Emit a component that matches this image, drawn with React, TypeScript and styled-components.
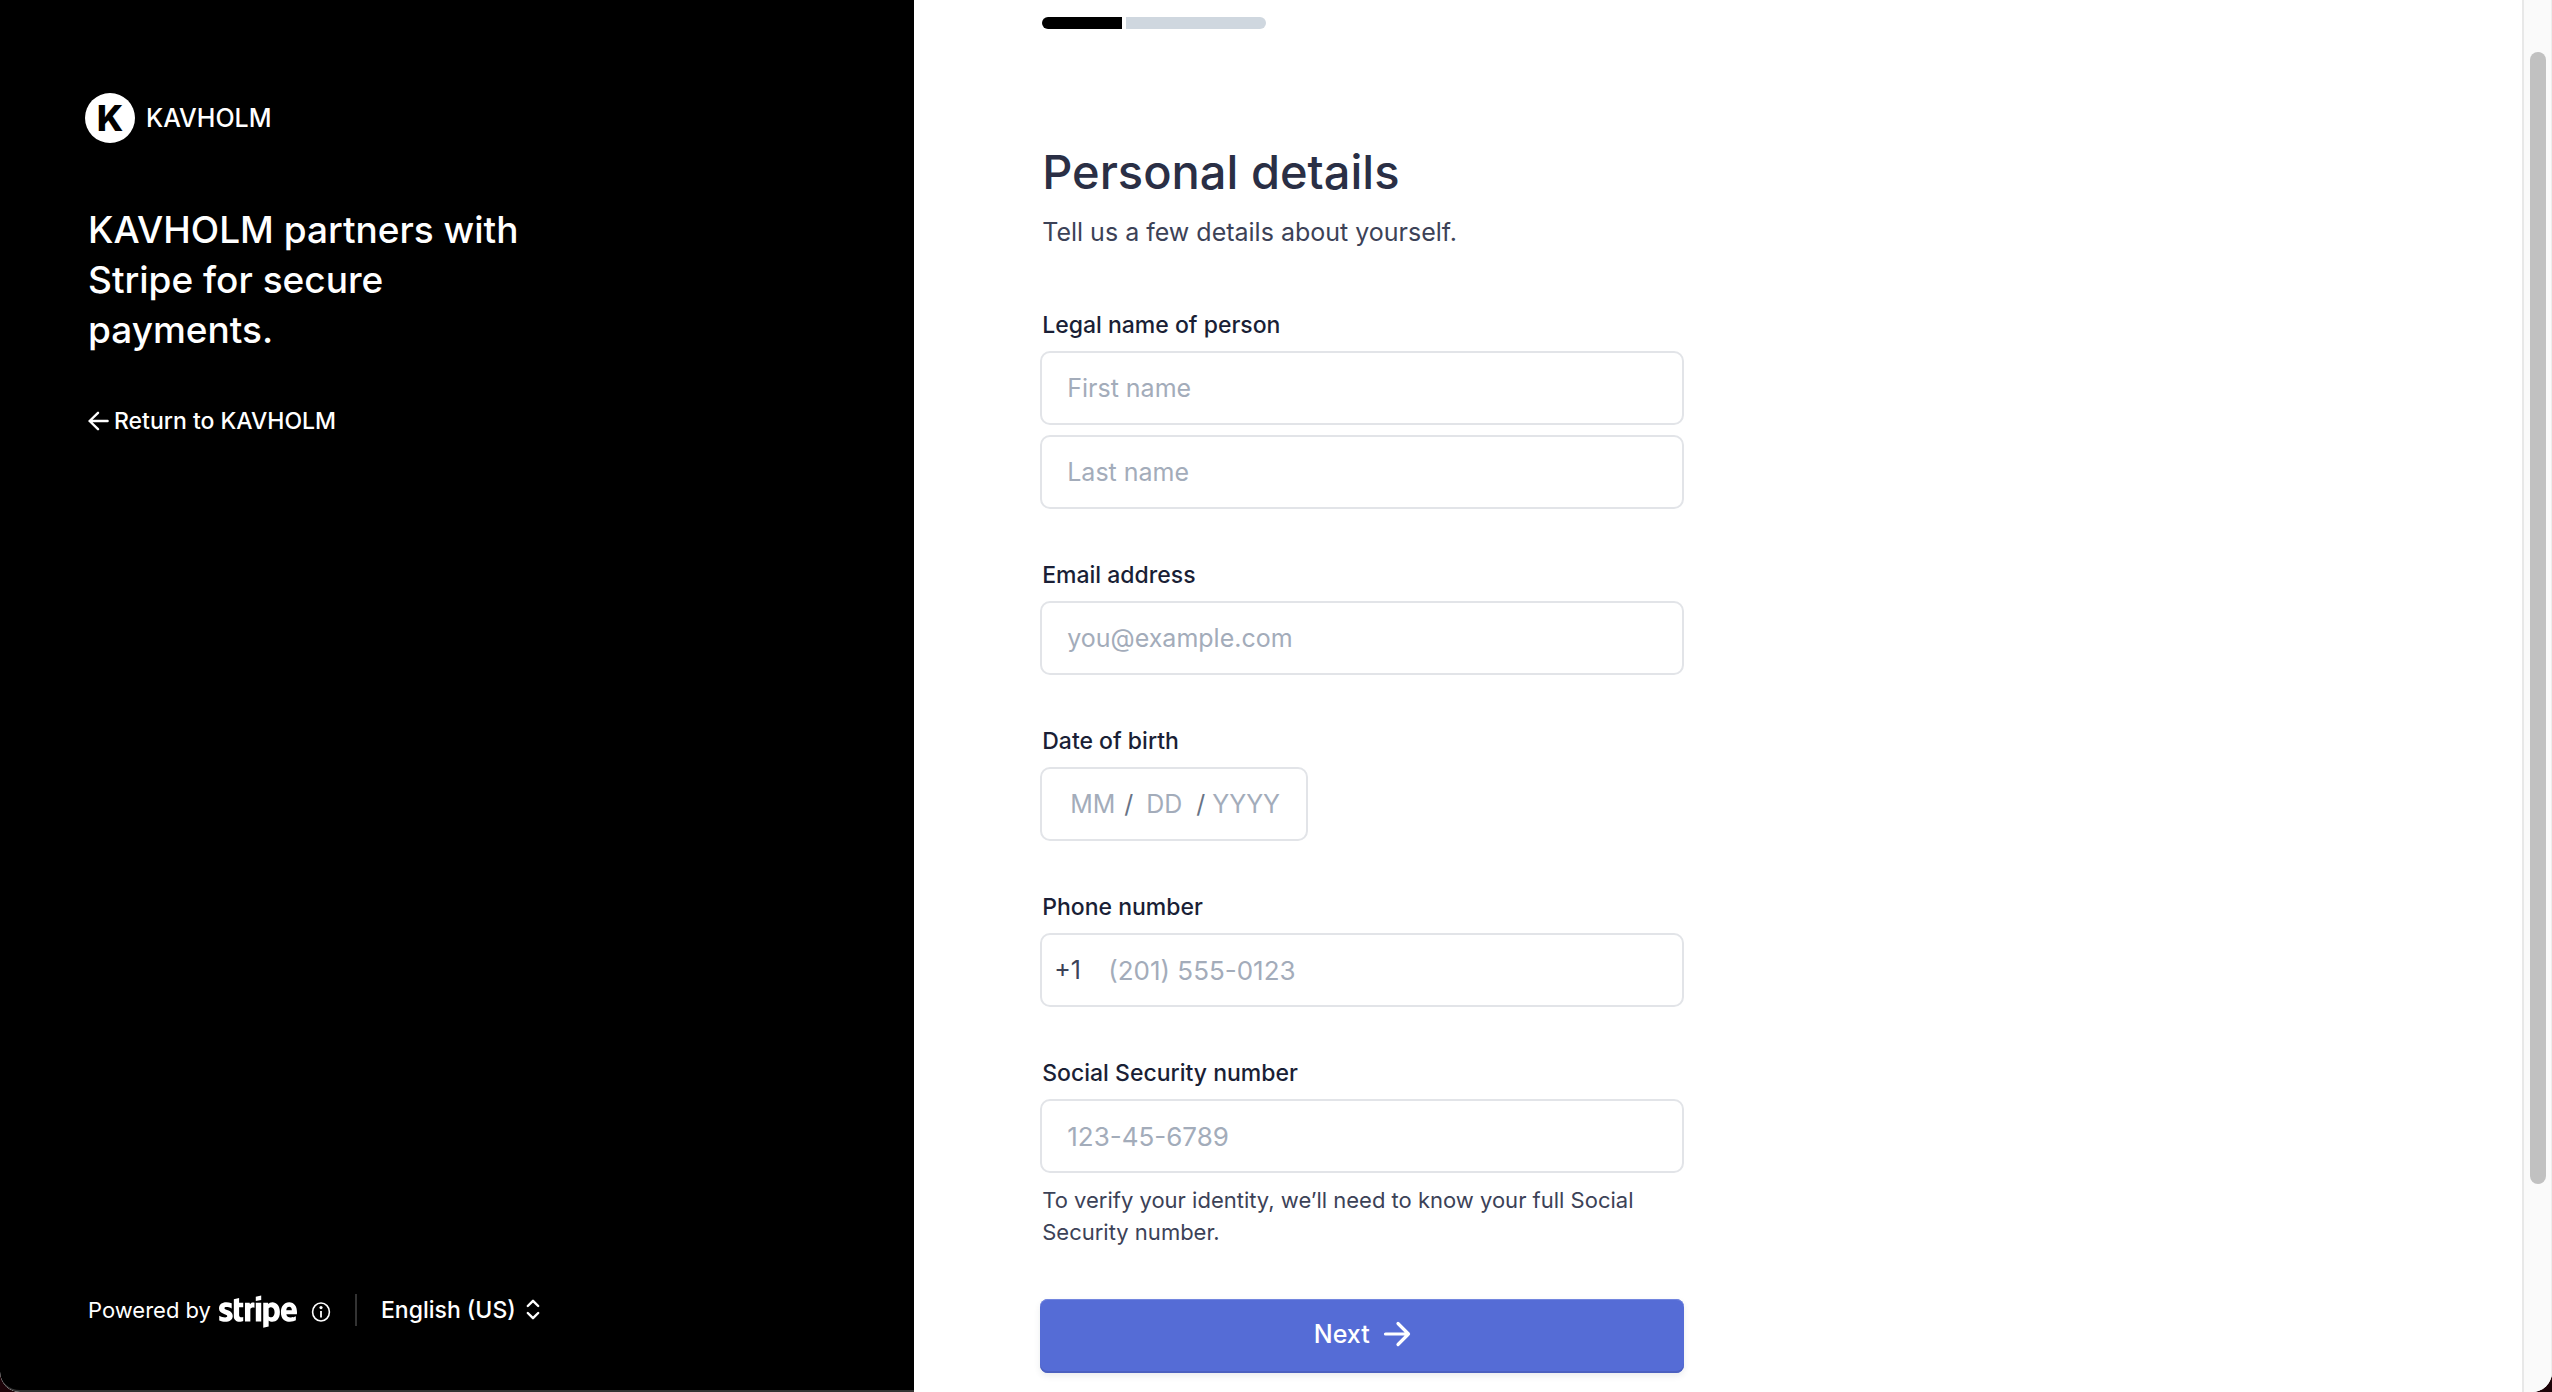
import React from 'react';
import styled, { createGlobalStyle } from 'styled-components';
import { FaStripe } from 'react-icons/fa';

const GlobalStyle = createGlobalStyle`
  *, *::before, *::after { box-sizing: border-box; }
  body {
    margin: 0;
    background: #1c0308;
    font-family: Inter, "Liberation Sans", sans-serif;
    -webkit-font-smoothing: antialiased;
  }
  h1, h2, p { margin: 0; }
  button, input, select { font: inherit; }
`;

const Window = styled.div`
  display: grid;
  grid-template-columns: 29fr 51fr 30px;
  min-height: 100vh;
  background: #fff;
  border-radius: 0 0 20px 20px;
  overflow: hidden;
`;

/* ---------- brand panel ---------- */

const BrandPanel = styled.aside`
  display: flex;
  flex-direction: column;
  padding: 93px 85px 64px;
  background: #000;
  color: #fff;
  border-bottom: 2px solid #333;
  border-bottom-left-radius: 20px;
`;

const Brand = styled.div`
  display: flex;
  align-items: center;
  gap: 11px;
  font-size: 25px;
  font-weight: 500;
  line-height: 32px;
`;

const BrandMark = styled.span`
  display: flex;
  align-items: center;
  justify-content: center;
  width: 50px;
  height: 50px;
  border-radius: 50%;
  background: #fff;
  color: #000;
  font-size: 36px;
  font-weight: 800;
  line-height: 50px;
`;

const Pitch = styled.h2`
  max-width: 450px;
  margin-top: 62px;
  padding-left: 3px;
  font-size: 37px;
  font-weight: 500;
  line-height: 50px;
`;

const ReturnLink = styled.a`
  display: flex;
  align-items: center;
  align-self: flex-start;
  gap: 4px;
  margin-top: 50px;
  padding-left: 3px;
  color: inherit;
  font-size: 23px;
  font-weight: 500;
  line-height: 32px;
  text-decoration: none;
`;

const PanelFooter = styled.footer`
  display: flex;
  align-items: center;
  height: 32px;
  margin-top: auto;
  padding-left: 3px;
  line-height: 32px;
`;

const PoweredBy = styled.a`
  display: flex;
  align-items: center;
  gap: 8px;
  color: inherit;
  font-size: 22px;
  text-decoration: none;
`;

const StripeWordmark = styled(FaStripe)`
  width: 78px;
  height: 36px;
`;

const InfoButton = styled.button`
  display: flex;
  margin-left: 14px;
  padding: 0;
  border: 0;
  background: none;
  color: inherit;
`;

const Language = styled.label`
  display: grid;
  align-items: center;
  margin-left: 24px;
  padding-left: 24px;
  border-left: 2px solid #333;
  font-size: 23px;
  font-weight: 500;

  > * { grid-area: 1 / 1; }
  > svg { justify-self: end; pointer-events: none; }
`;

const LanguageSelect = styled.select`
  appearance: none;
  height: 32px;
  padding: 0 24px 0 0;
  border: 0;
  background: transparent;
  color: inherit;
  line-height: 32px;
`;

/* ---------- form ---------- */

const Content = styled.main`
  padding: 17px 126px 0;
`;

const Column = styled.div`
  width: 100%;
  max-width: 644px;
`;

const Progress = styled.div`
  display: flex;
  gap: 4px;
  width: 226px;
  height: 12px;
  padding-left: 2px;
`;

const ProgressPart = styled.span<{ $share: number; $done?: boolean }>`
  flex: ${(p) => p.$share};
  background: ${(p) => (p.$done ? '#000' : '#cfd7df')};

  &:first-child { border-radius: 6px 0 0 6px; }
  &:last-child { border-radius: 0 6px 6px 0; }
`;

const Title = styled.h1`
  margin-top: 115px;
  padding-left: 2px;
  color: #2a2f45;
  font-size: 47px;
  font-weight: 500;
  line-height: 56px;
`;

const Subtitle = styled.p`
  margin-top: 16px;
  padding-left: 2px;
  color: #3c4257;
  font-size: 25px;
  line-height: 32px;
`;

const Form = styled.form`
  display: flex;
  flex-direction: column;
  gap: 50px;
  margin-top: 61px;
`;

const Field = styled.div`
  display: flex;
  flex-direction: column;
  gap: 10px;
`;

const labelText = `
  padding-left: 2px;
  color: #1a1f36;
  font-size: 23px;
  font-weight: 500;
  line-height: 32px;
`;

const Label = styled.label`${labelText}`;
const GroupLabel = styled.span`${labelText}`;

const frame = `
  height: 74px;
  border: 2px solid #e2e4e8;
  border-radius: 10px;
  background: #fff;
`;

const entry = (numeric?: boolean) => `
  color: #3c4257;
  font-size: ${numeric ? 26 : 25}px;
  outline: none;
  &::placeholder { color: #a3acba; opacity: 1; }
`;

const TextInput = styled.input<{ $numeric?: boolean }>`
  ${frame}
  ${(p) => entry(p.$numeric)}
  width: 100%;
  padding: 0 25px;
`;

const CompoundBox = styled.div<{ $fit?: boolean }>`
  ${frame}
  display: flex;
  align-items: center;
  align-self: ${(p) => (p.$fit ? 'flex-start' : 'stretch')};
  padding-left: ${(p) => (p.$fit ? 28 : 12)}px;
  color: #3c4257;
  font-size: 25px;
`;

const InnerInput = styled.input<{ $width?: number; $numeric?: boolean }>`
  ${(p) => entry(p.$numeric)}
  flex: ${(p) => (p.$width ? `0 0 ${p.$width}px` : 1)};
  min-width: 0;
  width: ${(p) => (p.$width ? `${p.$width}px` : 'auto')};
  height: 100%;
  padding: 0;
  border: 0;
  background: transparent;
`;

const DialCode = styled.span`
  width: 54px;
`;

const Slash = styled.span<{ $width: number }>`
  width: ${(p) => p.$width}px;
  color: #687385;
`;

const Hint = styled.p`
  padding: 1px 2px;
  color: #3c4257;
  font-size: 22px;
  line-height: 32px;
`;

const NextButton = styled.button`
  display: flex;
  align-items: center;
  justify-content: center;
  gap: 13px;
  height: 74px;
  padding: 0 0 4px;
  border: 0;
  border-radius: 8px;
  background: #556cd6;
  box-shadow: inset 0 1px 0 #7386df, inset 0 -2px 0 #4c60c0, 0 3px 6px rgba(60, 66, 87, 0.1);
  color: #fff;
  font-size: 25px;
  font-weight: 500;
`;

/* ---------- scroll rail ---------- */

const Rail = styled.div`
  display: flex;
  padding: 52px 5px 208px 6px;
  border-left: 2px solid #e8e8e8;
  border-right: 1px solid #ededed;
  background: #fafafa;
`;

const Thumb = styled.div`
  flex: 1;
  border-radius: 8px;
  background: #c1c1c1;
`;

/* ---------- icons ---------- */

const ArrowLeft = () => (
  <svg width="22" height="20" viewBox="0 0 22 20" fill="none" stroke="currentColor" strokeWidth="2.4" strokeLinecap="round" strokeLinejoin="round" aria-hidden="true">
    <path d="M19.6 10H1.6M10 1.8 1.6 10l8.4 8.2" />
  </svg>
);

const ArrowRight = () => (
  <svg width="28" height="26" viewBox="0 0 28 26" fill="none" stroke="currentColor" strokeWidth="3.2" strokeLinecap="round" strokeLinejoin="round" aria-hidden="true">
    <path d="M2.5 13h23M15 2.5 25.5 13 15 23.5" />
  </svg>
);

const InfoIcon = () => (
  <svg width="20" height="24" viewBox="0 0 20 24" fill="none" stroke="currentColor" aria-hidden="true">
    <ellipse cx="10" cy="14" rx="8.4" ry="9" strokeWidth="1.6" />
    <path d="M10 13v6.4" strokeWidth="1.8" />
    <circle cx="10" cy="9.6" r="1.6" fill="currentColor" stroke="none" />
  </svg>
);

const Chevrons = () => (
  <svg width="14" height="22" viewBox="0 0 14 22" fill="none" stroke="currentColor" strokeWidth="2.4" strokeLinecap="round" strokeLinejoin="round" aria-hidden="true">
    <path d="M1.8 7 7 1.8 12.2 7M1.8 14 7 19.2l5.2-5.2" />
  </svg>
);

export default function App() {
  return (
    <>
      <GlobalStyle />
      <Window>
        <BrandPanel>
          <Brand>
            <BrandMark aria-hidden="true">K</BrandMark>
            KAVHOLM
          </Brand>
          <Pitch>KAVHOLM partners with Stripe for secure payments.</Pitch>
          <ReturnLink href="#return">
            <ArrowLeft />
            Return to KAVHOLM
          </ReturnLink>
          <PanelFooter>
            <PoweredBy href="#stripe">
              Powered by
              <StripeWordmark viewBox="0 97 640 292" aria-label="Stripe" />
            </PoweredBy>
            <InfoButton type="button" aria-label="About Stripe">
              <InfoIcon />
            </InfoButton>
            <Language>
              <LanguageSelect aria-label="Language" defaultValue="en-US">
                <option value="en-US">English (US)</option>
              </LanguageSelect>
              <Chevrons />
            </Language>
          </PanelFooter>
        </BrandPanel>

        <Content>
          <Column>
            <Progress role="progressbar" aria-label="Progress" aria-valuenow={36}>
              <ProgressPart $share={4} $done />
              <ProgressPart $share={7} />
            </Progress>
            <Title>Personal details</Title>
            <Subtitle>Tell us a few details about yourself.</Subtitle>

            <Form onSubmit={(e) => e.preventDefault()}>
              <Field>
                <Label htmlFor="first-name">Legal name of person</Label>
                <TextInput id="first-name" placeholder="First name" />
                <TextInput aria-label="Last name" placeholder="Last name" />
              </Field>

              <Field>
                <Label htmlFor="email">Email address</Label>
                <TextInput id="email" type="email" placeholder="you@example.com" />
              </Field>

              <Field role="group" aria-labelledby="dob-label">
                <GroupLabel id="dob-label">Date of birth</GroupLabel>
                <CompoundBox $fit>
                  <InnerInput $width={54} aria-label="Month" placeholder="MM" />
                  <Slash $width={22}>/</Slash>
                  <InnerInput $width={50} aria-label="Day" placeholder="DD" />
                  <Slash $width={16}>/</Slash>
                  <InnerInput $width={94} aria-label="Year" placeholder="YYYY" />
                </CompoundBox>
              </Field>

              <Field>
                <Label htmlFor="phone">Phone number</Label>
                <CompoundBox>
                  <DialCode>+1</DialCode>
                  <InnerInput id="phone" type="tel" $numeric placeholder="(201) 555-0123" />
                </CompoundBox>
              </Field>

              <Field>
                <Label htmlFor="ssn">Social Security number</Label>
                <TextInput id="ssn" $numeric placeholder="123-45-6789" />
                <Hint>
                  To verify your identity, we’ll need to know your full Social Security number.
                </Hint>
              </Field>

              <NextButton type="submit">
                Next
                <ArrowRight />
              </NextButton>
            </Form>
          </Column>
        </Content>

        <Rail aria-hidden="true">
          <Thumb />
        </Rail>
      </Window>
    </>
  );
}
